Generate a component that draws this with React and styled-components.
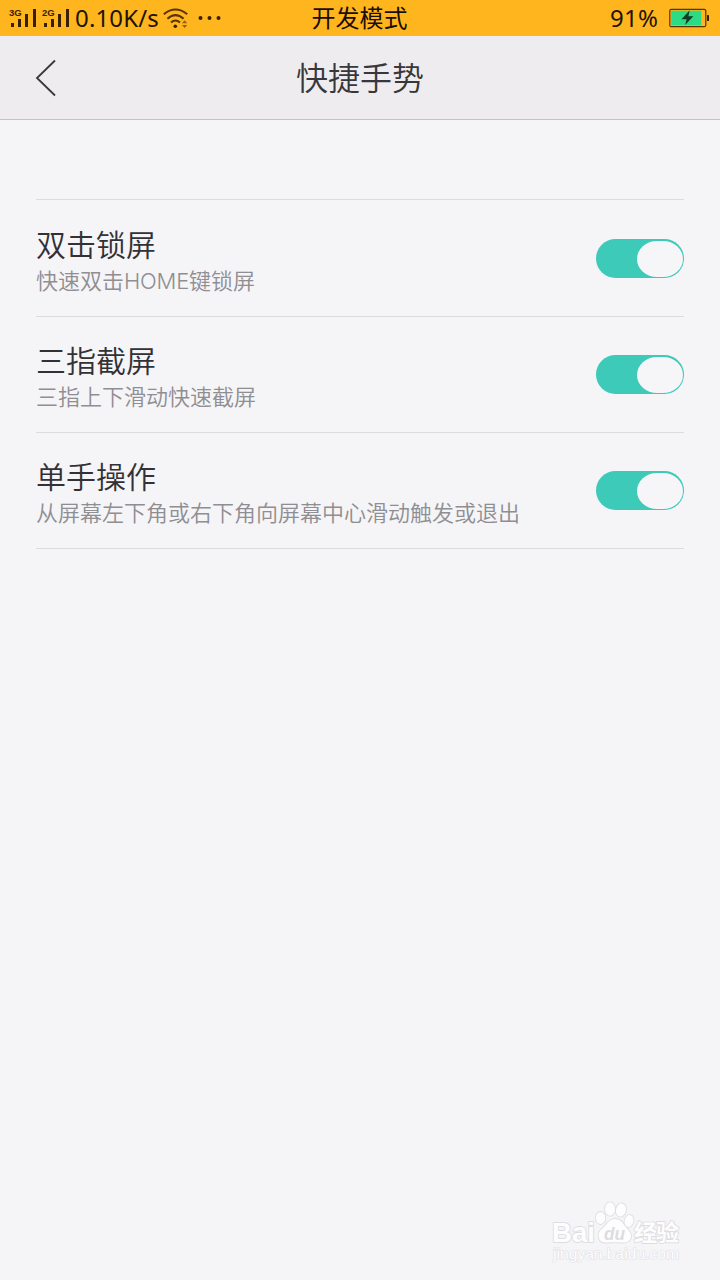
import React, { useState } from "react";
import styled, { createGlobalStyle } from "styled-components";

const GlobalStyle = createGlobalStyle`
  body {
    margin: 0;
    background-color: #f5f4f7;
    font-family: "Noto Sans CJK SC", sans-serif;
  }
`;

const StyledPage = styled.div`
  position: relative;
  height: 1280px;
  width: 720px;
  overflow: hidden;
  background-color: #f5f4f7;
`;

const StyledStatusBar = styled.div`
  display: grid;
  grid-template-columns: 1fr auto 1fr;
  align-items: center;
  height: 36px;
  padding: 0 10px 0 9px;
  background-color: #ffb61e;
  color: #241203;
`;

const StyledStatusGroup = styled.div`
  display: flex;
  align-items: center;
  justify-content: ${(props) => (props.$end ? "flex-end" : "flex-start")};
  height: 36px;
`;

const StyledStatusText = styled.span`
  width: ${(props) => props.$width}px;
  margin: -1px ${(props) => props.$gap}px 0 0;
  font-family: "Noto Sans", sans-serif;
  font-size: 24px;
  line-height: 36px;
  letter-spacing: ${(props) => props.$spacing}px;
  white-space: nowrap;
`;

const StyledStatusTitle = styled.span`
  margin-top: -2px;
  font-size: 24px;
  line-height: 36px;
  color: #1a0d02;
`;

const StyledHeader = styled.header`
  display: grid;
  grid-template-columns: 120px 1fr 120px;
  align-items: center;
  box-sizing: border-box;
  height: 84px;
  background-color: #eeecef;
  border-bottom: 1px solid #c4c3c7;
`;

const StyledBack = styled.button`
  display: flex;
  width: 24px;
  height: 40px;
  margin-left: 34px;
  padding: 0;
  border: none;
  background: none;
`;

const StyledTitle = styled.h1`
  margin: 0 0 3px;
  font-size: 32px;
  font-weight: 350;
  line-height: 48px;
  text-align: center;
  color: #38373b;
`;

const StyledList = styled.div`
  margin: 79px 36px 0;
  padding-top: 1px;
  border-top: 1px solid #dcdbde;
`;

const StyledRow = styled.div`
  display: flex;
  align-items: center;
  justify-content: space-between;
  box-sizing: border-box;
  height: 116px;
  border-bottom: 1px solid #dcdbde;
`;

const StyledLabel = styled.div`
  padding-top: 2px;
  font-size: 30px;
  font-weight: 350;
  line-height: 38px;
  color: #323135;
`;

const StyledHint = styled.div`
  font-size: 22px;
  font-weight: 350;
  line-height: 34px;
  color: #8f8e92;
`;

const StyledLatin = styled.span`
  font-family: Inter, sans-serif;
  font-weight: 300;
  line-height: 1;
  letter-spacing: -0.2px;
`;

const StyledSwitch = styled.button`
  display: flex;
  justify-content: ${(props) => (props.$on ? "flex-end" : "flex-start")};
  box-sizing: border-box;
  width: 88px;
  height: 39px;
  padding: 1.5px;
  border: none;
  border-radius: 20px;
  background-color: ${(props) => (props.$on ? "#3ecab8" : "#c4c3c7")};
`;

const StyledKnob = styled.span`
  width: 46px;
  height: 36px;
  border-radius: 20px / 18px;
  background-color: #f6f5f8;
`;

const StyledWatermark = styled.svg`
  position: absolute;
  left: 540px;
  top: 1190px;
`;

const settings = [
  {
    label: "双击锁屏",
    hint: (
      <>
        快速双击<StyledLatin>HOME</StyledLatin>键锁屏
      </>
    ),
  },
  { label: "三指截屏", hint: "三指上下滑动快速截屏" },
  { label: "单手操作", hint: "从屏幕左下角或右下角向屏幕中心滑动触发或退出" },
];

function Signal({ network }) {
  return (
    <svg width="33" height="36" viewBox="0 0 33 36" fill="#3a2003">
      <text
        x="0"
        y="16"
        fontFamily="Liberation Sans, sans-serif"
        fontSize="9.5"
        fontWeight="700"
      >
        {network}
      </text>
      <rect x="2" y="23" width="3" height="4" />
      <rect x="9" y="19" width="3" height="8" />
      <rect x="16" y="14" width="3" height="13" />
      <rect x="24" y="9" width="3" height="18" />
    </svg>
  );
}

function Wifi() {
  return (
    <svg width="26" height="36" viewBox="0 0 26 36" fill="none">
      <g stroke="#5a3504" strokeWidth="2">
        <path d="M0.8 14.2 Q12.5 4.8 24.2 14.2" />
        <path d="M4.4 18.7 Q12.5 11.5 20.6 18.7" />
        <path d="M8 22.5 Q12.5 18.5 17 22.5" />
      </g>
      <circle cx="12.3" cy="26.2" r="1.8" fill="#3a2003" />
      <path d="M19 23.3 L21.6 20.3 L24.2 23.3 Z" fill="#94600b" />
      <path d="M19 25 L21.6 28 L24.2 25 Z" fill="#94600b" />
    </svg>
  );
}

function Dots() {
  return (
    <svg width="34" height="36" viewBox="0 0 34 36" fill="#3a2003">
      <circle cx="11.5" cy="18" r="2" />
      <circle cx="20.5" cy="18" r="2" />
      <circle cx="29.5" cy="18" r="2" />
    </svg>
  );
}

function Battery() {
  return (
    <svg width="41" height="36" viewBox="0 0 41 36">
      <rect
        x="0.8"
        y="9.3"
        width="36"
        height="17.4"
        rx="1.5"
        fill="none"
        stroke="#5a3504"
        strokeWidth="1.2"
      />
      <rect x="2.2" y="10.7" width="30" height="14.6" fill="#2bdc84" />
      <rect x="38" y="15" width="2" height="6" rx="0.5" fill="#3a2003" />
      <path
        d="M20.7 10.3 L12.5 19.2 H17.6 L16.1 25 L24.3 16.3 H19.4 Z"
        fill="#123d20"
      />
    </svg>
  );
}

function Watermark() {
  return (
    <StyledWatermark width="160" height="90" viewBox="0 0 160 90">
      <g
        fill="#fdfdfe"
        stroke="#dedde1"
        strokeWidth="1.8"
        strokeLinejoin="round"
        style={{ paintOrder: "stroke" }}
      >
        <text
          x="12"
          y="52"
          textLength="43"
          lengthAdjust="spacingAndGlyphs"
          fontFamily="Liberation Sans, sans-serif"
          fontSize="28"
          fontWeight="700"
        >
          Bai
        </text>
        <ellipse cx="60.5" cy="28" rx="4.8" ry="6" />
        <ellipse cx="70" cy="19" rx="5" ry="6.7" />
        <ellipse cx="81" cy="20" rx="5" ry="6.7" transform="rotate(12 81 20)" />
        <ellipse cx="89" cy="31" rx="4.4" ry="6" transform="rotate(15 89 31)" />
        <path d="M75 29 C69 29 67 34 63 38 C59 41 58 44 59 48 C60 52 64 53 68 52.5 C73 52 77 52 81 52.5 C87 53 91 51 91 46 C91 42 88 40 85 36 C82 32 80 29 75 29 Z" />
        <text
          x="94"
          y="51"
          textLength="45"
          fontFamily="Noto Sans CJK SC, sans-serif"
          fontSize="23"
          fontWeight="700"
        >
          经验
        </text>
      </g>
      <text
        x="64"
        y="50"
        textLength="21"
        lengthAdjust="spacingAndGlyphs"
        fontFamily="Liberation Sans, sans-serif"
        fontSize="19"
        fontStyle="italic"
        fontWeight="700"
        fill="#dddce0"
      >
        du
      </text>
      <text
        x="13"
        y="69"
        textLength="126"
        lengthAdjust="spacingAndGlyphs"
        fontFamily="Liberation Sans, sans-serif"
        fontSize="15"
        fill="#fdfdfe"
        stroke="#e2e1e5"
        strokeWidth="1.2"
        style={{ paintOrder: "stroke" }}
      >
        jingyan.baidu.com
      </text>
    </StyledWatermark>
  );
}

function SettingRow({ label, hint }) {
  const [on, setOn] = useState(true);

  return (
    <StyledRow>
      <div>
        <StyledLabel>{label}</StyledLabel>
        <StyledHint>{hint}</StyledHint>
      </div>
      <StyledSwitch $on={on} onClick={() => setOn(!on)}>
        <StyledKnob />
      </StyledSwitch>
    </StyledRow>
  );
}

function App() {
  return (
    <StyledPage>
      <GlobalStyle />
      <StyledStatusBar>
        <StyledStatusGroup>
          <Signal network="3G" />
          <Signal network="2G" />
          <StyledStatusText $width={83} $gap={5} $spacing={0.15}>
            0.10K/s
          </StyledStatusText>
          <Wifi />
          <Dots />
        </StyledStatusGroup>
        <StyledStatusTitle>开发模式</StyledStatusTitle>
        <StyledStatusGroup $end>
          <StyledStatusText $width={49} $gap={10} $spacing={0.3}>
            91%
          </StyledStatusText>
          <Battery />
        </StyledStatusGroup>
      </StyledStatusBar>
      <StyledHeader>
        <StyledBack>
          <svg width="24" height="40" viewBox="0 0 24 40" fill="none">
            <path d="M21 2.5 L3 20 L21 37.5" stroke="#38373b" strokeWidth="1.8" />
          </svg>
        </StyledBack>
        <StyledTitle>快捷手势</StyledTitle>
      </StyledHeader>
      <StyledList>
        {settings.map((setting) => (
          <SettingRow key={setting.label} {...setting} />
        ))}
      </StyledList>
      <Watermark />
    </StyledPage>
  );
}

export default App;
